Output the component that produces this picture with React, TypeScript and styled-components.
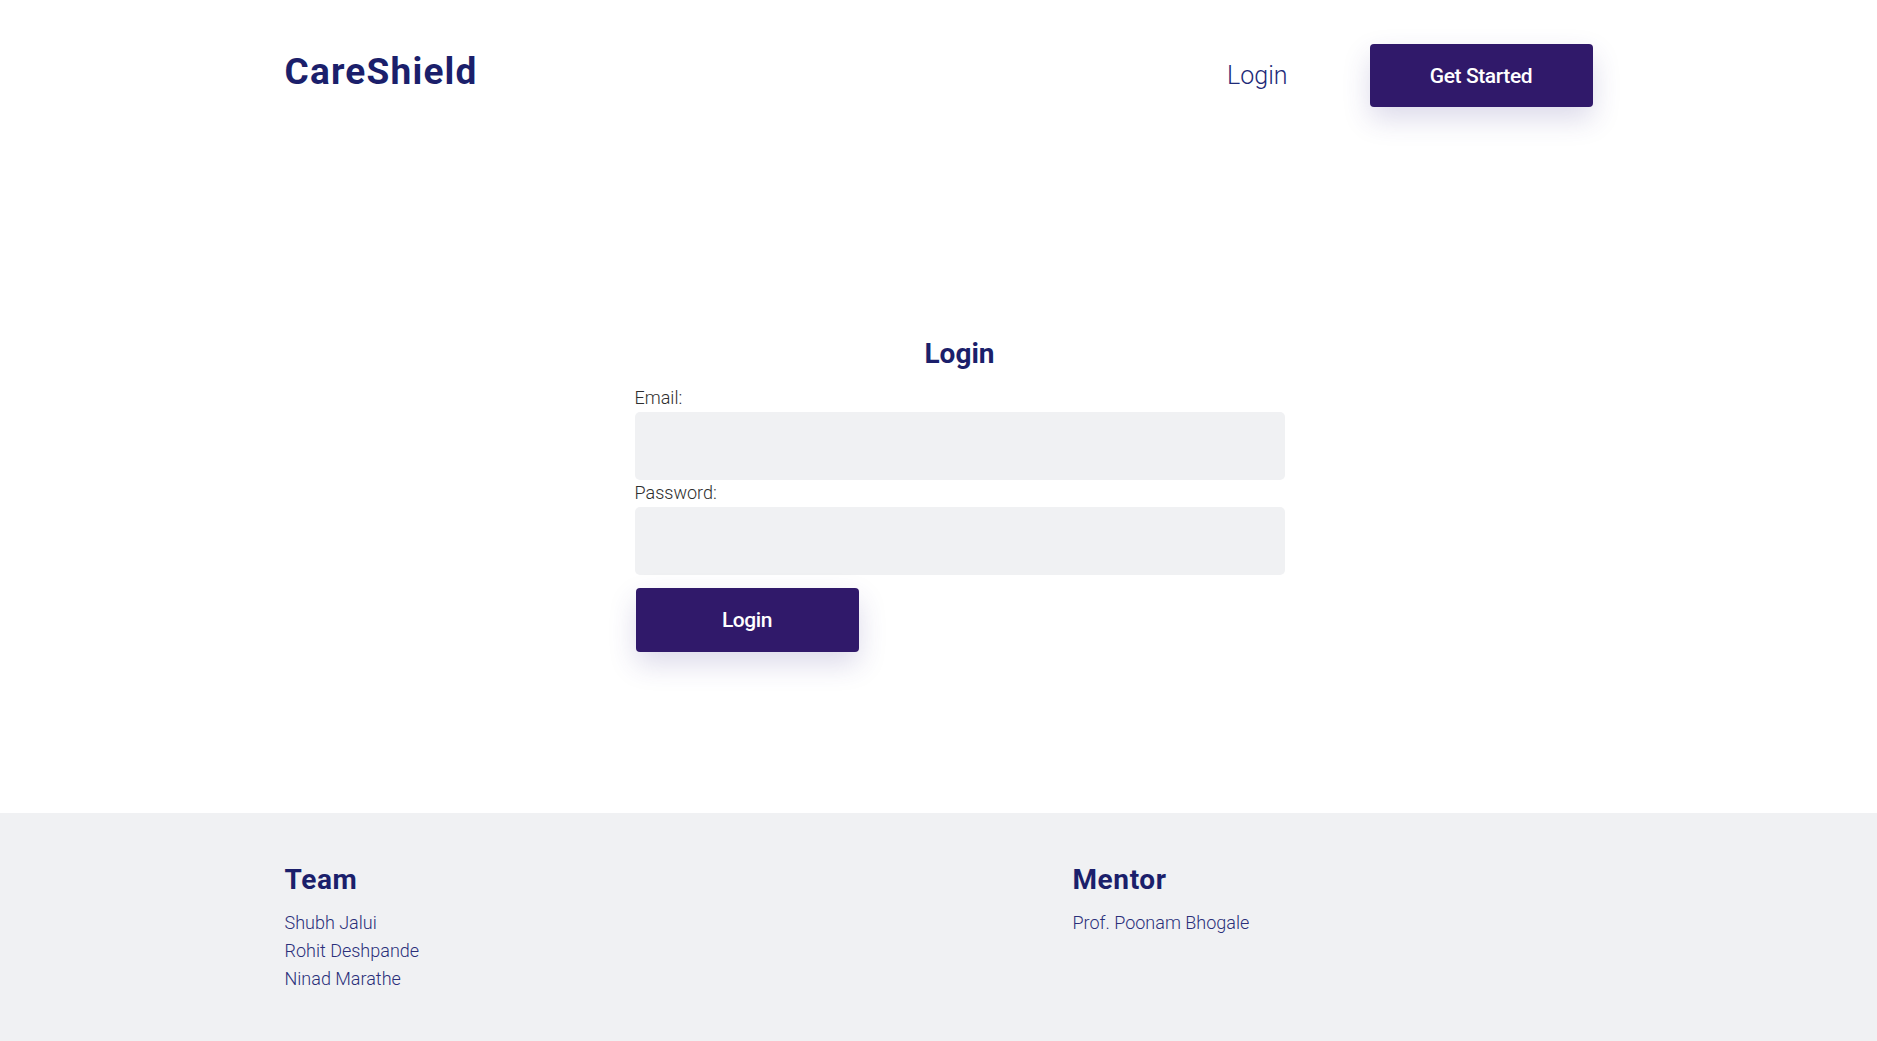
import React from "react";
import styled, { createGlobalStyle } from "styled-components";

const GlobalStyle = createGlobalStyle`
  html, body { margin: 0; padding: 0; background: #ffffff; }
  body { font-family: Roboto, "Noto Sans", sans-serif; }
  * { box-sizing: border-box; }
`;

const Page = styled.div`
  min-height: 1041px;
  display: flex;
  flex-direction: column;
`;

const Container = styled.div`
  width: 1308px;
  margin: 0 auto;
`;

const Header = styled(Container)`
  display: flex;
  align-items: center;
  justify-content: space-between;
  padding-top: 44px;
`;

const Logo = styled.div`
  font-family: Roboto, sans-serif;
  font-weight: 700;
  font-size: 37px;
  line-height: 41px;
  color: #1b1f6b;
  margin-bottom: 9px;
  letter-spacing: 1.2px;
`;

const Nav = styled.nav`
  display: flex;
  align-items: center;
  gap: 82px;
`;

const NavLink = styled.a`
  font-family: Roboto, sans-serif;
  font-weight: 300;
  font-size: 25px;
  color: #1e2a78;
  text-decoration: none;
  cursor: pointer;
`;

const PrimaryButton = styled.button<{ $w: number; $h: number }>`
  width: ${(p) => p.$w}px;
  height: ${(p) => p.$h}px;
  background: #30196a;
  color: #ffffff;
  border: none;
  border-radius: 4px;
  font-family: Roboto, sans-serif;
  font-weight: 500;
  font-size: 21px;
  letter-spacing: -0.4px;
  box-shadow: 0 12px 28px rgba(60, 50, 140, 0.18);
  cursor: pointer;
`;

const Main = styled.main`
  flex: 1;
  display: flex;
  justify-content: center;
  padding: 230px 0 150px 42px;
`;

const Form = styled.form`
  width: 650px;
  display: flex;
  flex-direction: column;
`;

const Title = styled.h2`
  margin: 0 0 16px;
  text-align: center;
  font-family: Roboto, sans-serif;
  font-weight: 700;
  font-size: 28px;
  line-height: 34px;
  color: #1b1f6b;
`;

const Label = styled.label`
  font-family: Roboto, sans-serif;
  font-weight: 300;
  font-size: 18px;
  line-height: 22px;
  color: #2e2e2e;
  margin-bottom: 3px;
`;

const Input = styled.input`
  width: 100%;
  height: 68px;
  background: #f0f1f3;
  border: none;
  border-radius: 5px;
  margin-bottom: 2px;
  outline: none;
  padding: 0 14px;
  font-size: 17px;
`;

const SubmitRow = styled.div`
  margin-top: 11px;
  padding-left: 1px;
`;

const Footer = styled.footer`
  background: #f0f1f3;
  padding: 50px 0 48px;
`;

const FooterGrid = styled(Container)`
  display: grid;
  grid-template-columns: 788px 1fr;
`;

const FooterHeading = styled.h3`
  margin: 0 0 12px;
  font-family: Roboto, sans-serif;
  font-weight: 700;
  font-size: 28px;
  line-height: 34px;
  letter-spacing: 0.6px;
  color: #1b1f6b;
`;

const NameList = styled.ul`
  list-style: none;
  margin: 0;
  padding: 0;
`;

const Name = styled.li`
  font-family: Roboto, sans-serif;
  font-weight: 300;
  font-size: 18px;
  line-height: 28px;
  color: #2a2f7a;
`;

export default function App() {
  return (
    <Page>
      <GlobalStyle />
      <Header as="header">
        <Logo>CareShield</Logo>
        <Nav>
          <NavLink>Login</NavLink>
          <PrimaryButton $w={223} $h={63}>Get Started</PrimaryButton>
        </Nav>
      </Header>
      <Main>
        <Form onSubmit={(e) => e.preventDefault()}>
          <Title>Login</Title>
          <Label htmlFor="email">Email:</Label>
          <Input id="email" type="email" />
          <Label htmlFor="password">Password:</Label>
          <Input id="password" type="password" />
          <SubmitRow>
            <PrimaryButton type="submit" $w={223} $h={64}>Login</PrimaryButton>
          </SubmitRow>
        </Form>
      </Main>
      <Footer>
        <FooterGrid>
          <div>
            <FooterHeading>Team</FooterHeading>
            <NameList>
              <Name>Shubh Jalui</Name>
              <Name>Rohit Deshpande</Name>
              <Name>Ninad Marathe</Name>
            </NameList>
          </div>
          <div>
            <FooterHeading>Mentor</FooterHeading>
            <NameList>
              <Name>Prof. Poonam Bhogale</Name>
            </NameList>
          </div>
        </FooterGrid>
      </Footer>
    </Page>
  );
}
